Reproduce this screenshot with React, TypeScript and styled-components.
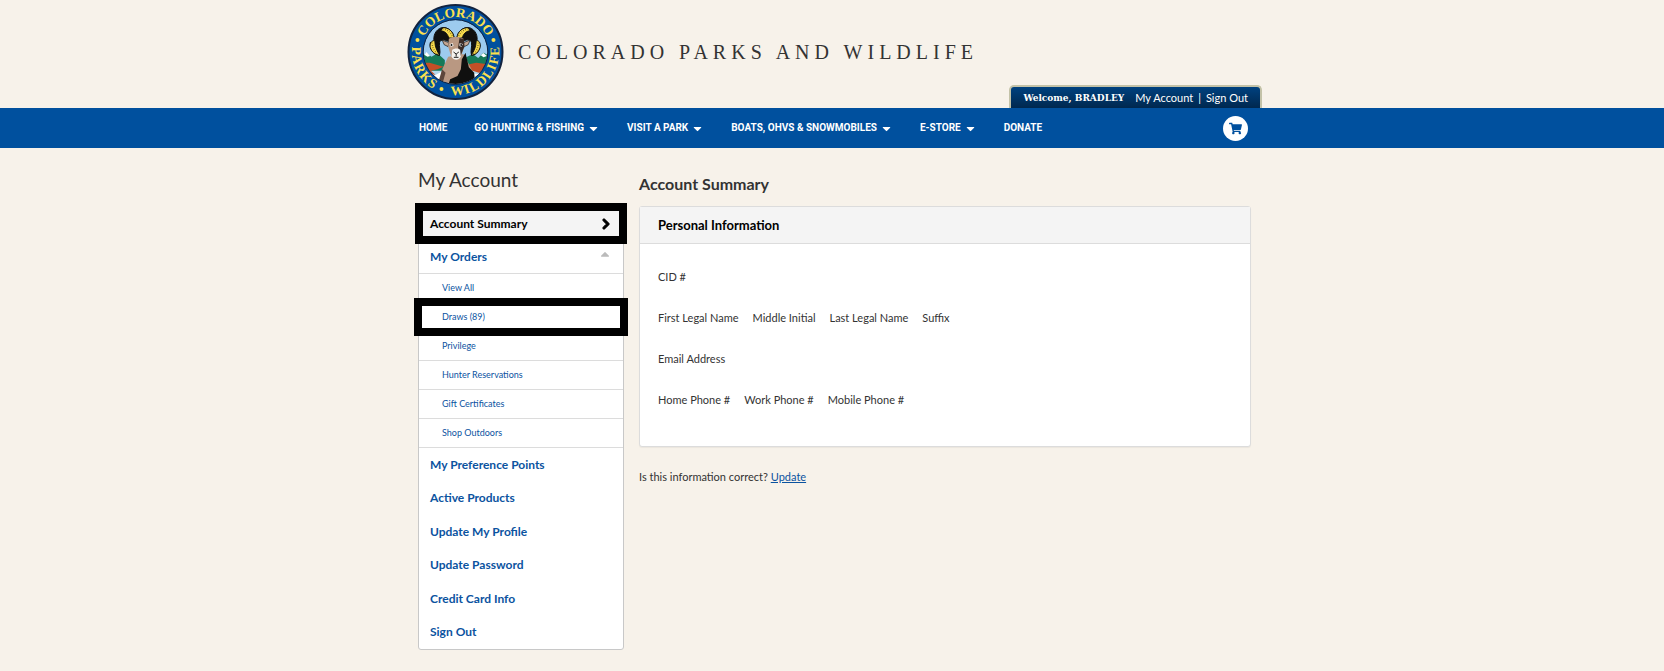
import React from "react";
import styled, { createGlobalStyle, css } from "styled-components";
import { FaCaretDown, FaCaretUp, FaChevronRight, FaShoppingCart } from "react-icons/fa";

const blue = "#00509e";
const link = "#0b539f";
const sans = `Lato, "Liberation Sans", sans-serif`;

const GlobalStyle = createGlobalStyle`
  * { box-sizing: border-box; }
  body {
    margin: 0;
    background: #f7f2ea;
    color: #333;
    font: 11px/16px ${sans};
  }
  a { color: ${link}; text-decoration: none; }
  ul { margin: 0; padding: 0; list-style: none; }
  h1, h2, h3, p { margin: 0; }
`;

const Container = styled.div`
  width: 100%;
  max-width: 860px;
  margin: 0 auto;
`;

const HeaderInner = styled(Container)`
  display: flex;
  justify-content: space-between;
  align-items: flex-end;
  min-height: 108px;
  padding-left: 5px;
`;

const Brand = styled.a`
  display: flex;
  align-items: center;
  gap: 14px;
  padding-bottom: 8px;
  color: #333;
`;

const BrandName = styled.span`
  font: 20px/24px "Liberation Serif", serif;
  letter-spacing: 5px;
  white-space: nowrap;
`;

const AccountTab = styled.div`
  display: flex;
  align-items: center;
  gap: 11px;
  height: 23px;
  margin-left: -40px;
  padding: 0 12px;
  border: 2px solid #c3c2a8;
  border-bottom: 0;
  border-radius: 5px 5px 0 0;
  background: linear-gradient(#00417f, #00284f);
  color: #fff;
  font-size: 11px;
  white-space: nowrap;
`;

const Welcome = styled.strong`
  font: bold 10px/16px "DejaVu Serif Condensed", "DejaVu Serif", serif;
`;

const AccountLinks = styled.span`
  display: flex;
  gap: 5px;
  a { color: #fff; }
`;

const NavBar = styled.nav`
  background: ${blue};
`;

const NavInner = styled(Container)`
  display: flex;
  justify-content: space-between;
  align-items: center;
  min-height: 40px;
  padding: 0 14px 0 17px;
`;

const NavList = styled.ul`
  display: flex;
  gap: 27px;
`;

const NavLink = styled.a`
  display: flex;
  align-items: center;
  gap: 3px;
  color: #fff;
  font-family: Roboto, ${sans};
  font-size: 10px;
  font-weight: 700;
  line-height: 18px;
  white-space: nowrap;
  svg { font-size: 13px; }
`;

const CartButton = styled.button`
  display: flex;
  align-items: center;
  justify-content: center;
  width: 25px;
  height: 25px;
  padding: 0;
  border: 0;
  border-radius: 50%;
  background: #fff;
  color: ${blue};
  font-size: 13px;
`;

const Page = styled(Container)`
  display: grid;
  grid-template-columns: 206px 1fr;
  align-items: start;
  gap: 15px;
  padding: 20px 11px 21px 16px;
`;

const SideTitle = styled.h1`
  font-size: 19px;
  line-height: 24px;
  font-weight: 400;
  margin-bottom: 14px;
`;

const SideMenu = styled.ul`
  border: 1px solid #c8c8c8;
  border-radius: 3px;
  background: #fff;
  font-size: 12px;
  font-weight: 700;
`;

const marked = css<{ $spread?: number }>`
  &::after {
    content: "";
    position: absolute;
    inset: -${(p) => p.$spread}px;
    border: 8px solid #000;
    pointer-events: none;
    z-index: 1;
  }
`;

const MenuItem = styled.li<{ $active?: boolean; $spread?: number }>`
  position: relative;
  background: ${(p) => (p.$active ? "#f4f4f4" : "transparent")};
  ${(p) => p.$spread && marked}
`;

const MenuLink = styled.a<{ $active?: boolean }>`
  display: flex;
  align-items: center;
  justify-content: space-between;
  height: 33px;
  padding: 0 11px;
  color: ${(p) => (p.$active ? "#000" : link)};
`;

const ActiveMark = styled(FaChevronRight)`
  stroke: currentColor;
  stroke-width: 50px;
`;

const OpenMark = styled.span`
  display: flex;
  padding-bottom: 6px;
  color: #bbb;
  font-size: 14px;
`;

const OrderList = styled.ul`
  font-size: 9px;
  font-weight: 400;
  border-top: 1px solid #dcdcdc;
`;

const OrderItem = styled(MenuItem)`
  border-bottom: 1px solid #dcdcdc;
`;

const OrderLink = styled.a`
  display: block;
  padding: 6px 23px;
`;

const MoreList = styled.ul`
  display: grid;
  grid-auto-rows: 1fr;
  height: 201px;
  align-items: center;
`;

const Main = styled.main`
  padding-top: 6px;
`;

const MainTitle = styled.h2`
  font-size: 16px;
  line-height: 20px;
  padding-bottom: 12px;
`;

const Panel = styled.section`
  border: 1px solid #dcdcdc;
  border-radius: 3px;
  background: #fff;
  box-shadow: 0 1px 1px rgba(0, 0, 0, 0.05);
`;

const PanelTitle = styled.h3`
  padding: 10px 18px;
  border-bottom: 1px solid #dcdcdc;
  background: #f4f4f4;
  color: #000;
  font-size: 13px;
  line-height: 16px;
`;

const PanelBody = styled.div`
  display: flex;
  flex-direction: column;
  gap: 25px;
  padding: 25px 18px 38px;
`;

const FieldRow = styled.div`
  display: flex;
  gap: 14px;
`;

const Confirm = styled.p`
  margin-top: 22px;
  a { text-decoration: underline; }
`;

function Logo() {
  return (
    <svg width="97" height="96" viewBox="0 0 288 288" role="img" aria-label="Colorado Parks and Wildlife">
      <defs>
        <path id="ringTop" d="M39 144A105 105 0 0 1 249 144" />
        <path id="ringBottom" d="M17 110A131 131 0 1 0 271 110" />
        <clipPath id="scene"><circle cx="144" cy="144" r="96" /></clipPath>
      </defs>
      <circle cx="144" cy="144" r="141" fill={blue} stroke="#12233f" strokeWidth="6" />
      <g clipPath="url(#scene)">
        <rect x="40" y="40" width="210" height="210" fill="#9dcbee" />
        <path d="M40 205L95 190L200 190L250 200V250H40Z" fill="#b5d9ee" />
        <path d="M40 160L56 146L72 158L90 148L112 168L112 200H40Z" fill="#167a58" />
        <path d="M176 160L196 150L212 162L228 146L250 158V196H180Z" fill="#167a58" />
        <path d="M50 152L57 144L68 156L60 158ZM220 154L228 147L238 156L228 160Z" fill="#fff" />
        <path d="M40 176L66 176L108 188L90 196L70 200L84 212L40 206Z" fill="#c44f27" />
        <path d="M178 182L206 176L250 182V204L214 206L188 198Z" fill="#c44f27" />
        <path d="M78 216L108 200L116 240H88ZM186 206L222 212L204 236H190Z" fill="#fff" />
        <path d="M122 158L104 196L92 250H202L192 196L168 150Z" fill="#b99882" />
        <path d="M163 166L174 146L184 190L200 206L204 250H120L128 226L150 216L160 196Z" fill="#10100f" />
        <path d="M104 196L114 206L102 250H88Z" fill="#5d463b" />
      </g>
      <g stroke="#10100f" strokeWidth="3" strokeLinejoin="round">
        <path d="M140 104C138 82 120 68 102 71C84 77 76 96 80 114L68 116C66 134 78 152 96 154C100 142 94 128 96 116C100 104 112 106 126 114Z" fill="#10100f" />
        <path d="M148 104C150 82 168 68 186 71C204 77 212 96 208 114L216 116C218 134 210 152 192 154C188 142 194 128 192 116C188 104 176 106 162 114Z" fill="#10100f" />
        <path d="M140 102C138 82 122 70 106 71L100 80C114 82 120 90 124 102Z" fill="#f6d94b" />
        <path d="M148 102C150 82 166 70 182 71L188 80C174 82 168 90 164 102Z" fill="#f6d94b" />
        <path d="M82 110C72 108 66 120 68 130C72 144 84 154 97 153C90 144 82 130 82 110Z" fill="#f6d94b" />
        <path d="M206 110C216 108 220 120 218 130C214 144 204 154 191 153C198 144 206 130 206 110Z" fill="#f6d94b" />
      </g>
      <g stroke="#6b5a1c" strokeWidth="4" strokeDasharray="2 5" fill="none">
        <path d="M134 96C128 84 120 77 106 75M154 96C160 84 168 77 182 75M74 116C74 130 80 142 90 149M212 116C212 130 208 142 198 149" />
      </g>
      <path d="M124 116L104 108L110 122L122 128ZM168 116L188 108L182 122L170 128Z" fill="#c4a692" stroke="#10100f" strokeWidth="2" />
      <path d="M124 104C136 96 156 96 168 104L170 128L160 160C156 170 136 170 132 160L122 128Z" fill="#b99882" />
      <path d="M156 102L170 106L170 130L158 158L152 130Z" fill="#3b2c26" />
      <path d="M134 138C140 132 154 132 158 138L160 158C154 170 138 170 132 158Z" fill="#f4f2ef" />
      <path d="M126 120L136 118L138 126L130 128ZM156 118L166 120L162 128L156 126Z" fill="#fff" />
      <circle cx="132" cy="123" r="3" fill="#111" />
      <circle cx="161" cy="123" r="3" fill="#111" />
      <path d="M138 144L146 150L154 144M146 150V158M139 160H153" stroke="#222" strokeWidth="3" fill="none" />
      <circle cx="144" cy="144" r="97" fill="none" stroke="#12233f" strokeWidth="3" />
      <g fill="#fbe04e" fontFamily="Liberation Serif, serif" fontWeight="700" fontSize="40" textAnchor="middle">
        <text><textPath href="#ringTop" startOffset="50%">COLORADO</textPath></text>
        <text letterSpacing="4"><textPath href="#ringBottom" startOffset="20%">PARKS</textPath></text>
        <text letterSpacing="4"><textPath href="#ringBottom" startOffset="72%">WILDLIFE</textPath></text>
        <circle cx="30" cy="108" r="6" />
        <circle cx="258" cy="108" r="6" />
        <circle cx="102" cy="255" r="6" />
      </g>
    </svg>
  );
}

const navItems = [
  { label: "HOME" },
  { label: "GO HUNTING & FISHING", menu: true },
  { label: "VISIT A PARK", menu: true },
  { label: "BOATS, OHVS & SNOWMOBILES", menu: true },
  { label: "E-STORE", menu: true },
  { label: "DONATE" },
];

const orders = ["View All", "Draws (89)", "Privilege", "Hunter Reservations", "Gift Certificates", "Shop Outdoors"];

const more = ["My Preference Points", "Active Products", "Update My Profile", "Update Password", "Credit Card Info", "Sign Out"];

const fields = [
  ["CID #"],
  ["First Legal Name", "Middle Initial", "Last Legal Name", "Suffix"],
  ["Email Address"],
  ["Home Phone #", "Work Phone #", "Mobile Phone #"],
];

export default function App() {
  return (
    <>
      <GlobalStyle />
      <header>
        <HeaderInner>
          <Brand href="#">
            <Logo />
            <BrandName>COLORADO PARKS AND WILDLIFE</BrandName>
          </Brand>
          <AccountTab>
            <Welcome>Welcome, BRADLEY</Welcome>
            <AccountLinks>
              <a href="#">My Account</a>
              <span>|</span>
              <a href="#">Sign Out</a>
            </AccountLinks>
          </AccountTab>
        </HeaderInner>
        <NavBar>
          <NavInner>
            <NavList>
              {navItems.map((item) => (
                <li key={item.label}>
                  <NavLink href="#">
                    {item.label}
                    {item.menu && <FaCaretDown />}
                  </NavLink>
                </li>
              ))}
            </NavList>
            <CartButton aria-label="Cart">
              <FaShoppingCart />
            </CartButton>
          </NavInner>
        </NavBar>
      </header>
      <Page>
        <aside>
          <SideTitle>My Account</SideTitle>
          <SideMenu>
            <MenuItem $active $spread={4}>
              <MenuLink $active href="#">
                Account Summary
                <ActiveMark />
              </MenuLink>
            </MenuItem>
            <MenuItem>
              <MenuLink href="#">
                My Orders
                <OpenMark>
                  <FaCaretUp />
                </OpenMark>
              </MenuLink>
              <OrderList>
                {orders.map((label) => (
                  <OrderItem key={label} $spread={label.startsWith("Draws") ? 5 : undefined}>
                    <OrderLink href="#">{label}</OrderLink>
                  </OrderItem>
                ))}
              </OrderList>
            </MenuItem>
            <li>
              <MoreList>
                {more.map((label) => (
                  <MenuItem key={label}>
                    <MenuLink href="#">{label}</MenuLink>
                  </MenuItem>
                ))}
              </MoreList>
            </li>
          </SideMenu>
        </aside>
        <Main>
          <MainTitle>Account Summary</MainTitle>
          <Panel>
            <PanelTitle>Personal Information</PanelTitle>
            <PanelBody>
              {fields.map((row) => (
                <FieldRow key={row[0]}>
                  {row.map((label) => (
                    <span key={label}>{label}</span>
                  ))}
                </FieldRow>
              ))}
            </PanelBody>
          </Panel>
          <Confirm>
            Is this information correct? <a href="#">Update</a>
          </Confirm>
        </Main>
      </Page>
    </>
  );
}
